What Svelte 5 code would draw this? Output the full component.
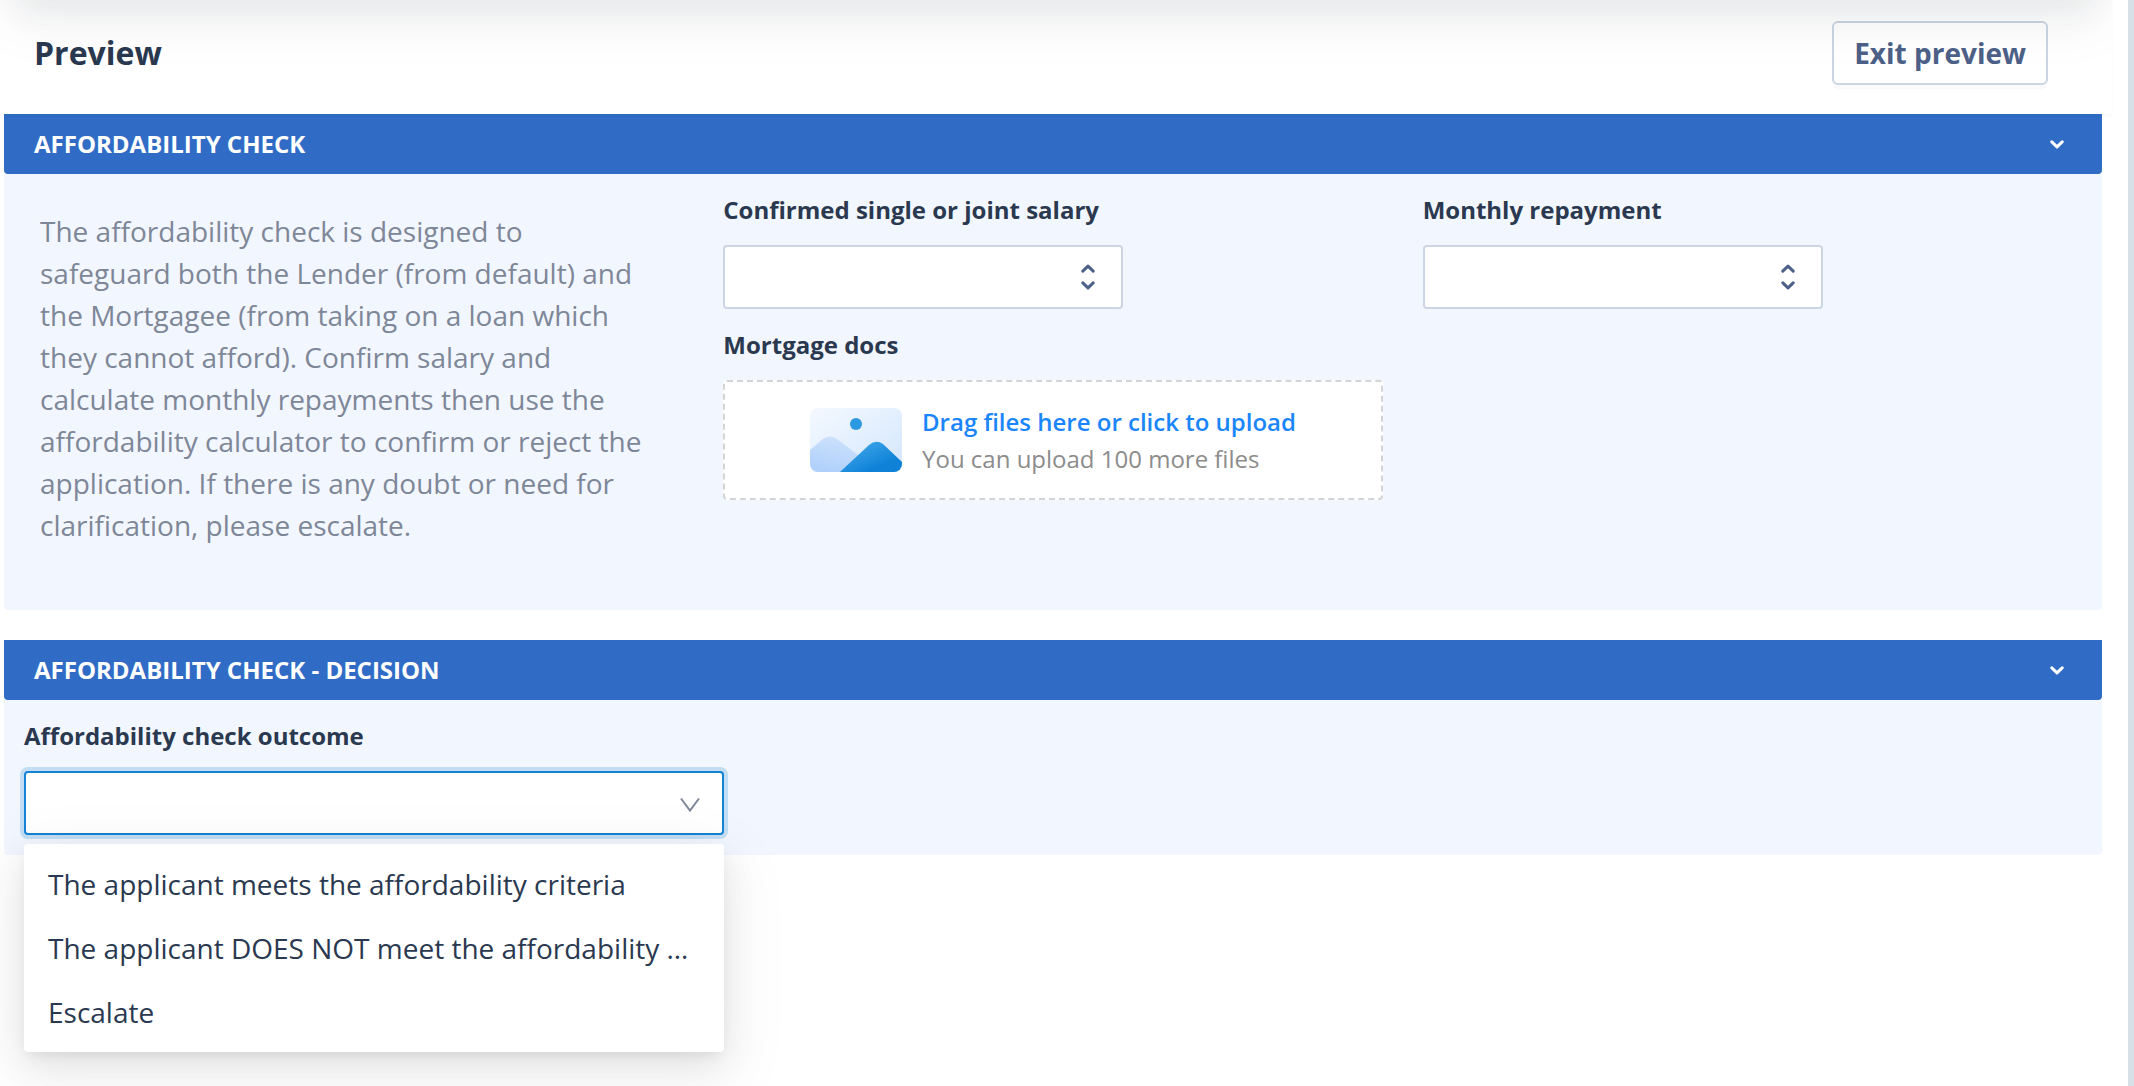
<script lang='ts'>
  type Option = { value: string, label: string }

  const intro = 'The affordability check is designed to safeguard both the Lender (from default) and the Mortgagee (from taking on a loan which they cannot afford). Confirm salary and calculate monthly repayments then use the affordability calculator to confirm or reject the application. If there is any doubt or need for clarification, please escalate.'

  const options: Option[] = [
    { value: 'meets', label: 'The applicant meets the affordability criteria' },
    { value: 'fails', label: 'The applicant DOES NOT meet the affordability criteria' },
    { value: 'escalate', label: 'Escalate' },
  ]

  let checkOpen = $state(true)
  let decisionOpen = $state(true)
  let menuOpen = $state(true)
  let outcome = $state('')
  let salary = $state<number | null>(null)
  let repayment = $state<number | null>(null)

  function choose(value: string) {
    outcome = value
    menuOpen = false
  }
</script>

{#snippet chevron()}
  <svg class='chevron' viewBox='0 0 14 9' width='14' height='9' aria-hidden='true'>
    <path d='M1.8 1.8 L7 6.8 L12.2 1.8' />
  </svg>
{/snippet}

{#snippet sectionHeader(title: string, open: boolean, toggle: () => void)}
  <h2>
    <button class='section-toggle' aria-expanded={open} onclick={toggle}>
      <span>{title}</span>
      {@render chevron()}
    </button>
  </h2>
{/snippet}

{#snippet stepper(step: (by: number) => void)}
  <div class='stepper'>
    <button class='up' aria-label='Increase' onclick={() => step(1)}>{@render chevron()}</button>
    <button aria-label='Decrease' onclick={() => step(-1)}>{@render chevron()}</button>
  </div>
{/snippet}

<div class='page'>
  <main>
    <header>
      <h1>Preview</h1>
      <button class='exit'>Exit preview</button>
    </header>

    <section>
      {@render sectionHeader('AFFORDABILITY CHECK', checkOpen, () => checkOpen = !checkOpen)}
      {#if checkOpen}
        <div class='body columns'>
          <p class='intro'>{intro}</p>
          <div class='column'>
            <div class='field'>
              <label for='salary'>Confirmed single or joint salary</label>
              <div class='number'>
                <input id='salary' type='number' bind:value={salary} />
                {@render stepper(by => salary = (salary ?? 0) + by)}
              </div>
            </div>
            <div class='field'>
              <label for='docs'>Mortgage docs</label>
              <div class='upload'>
                <svg class='picture' viewBox='0 0 92 64' width='92' height='64' aria-hidden='true'>
                  <defs>
                    <linearGradient id='sky' x1='0' y1='0' x2='1' y2='1'>
                      <stop offset='0' stop-color='#f4f9ff' />
                      <stop offset='1' stop-color='#d3e6fc' />
                    </linearGradient>
                    <linearGradient id='far' x1='0.6' y1='0' x2='0.3' y2='1'>
                      <stop offset='0' stop-color='#cde1fc' />
                      <stop offset='1' stop-color='#aed0fb' />
                    </linearGradient>
                    <linearGradient id='near' x1='0.2' y1='0.3' x2='0.65' y2='0.8'>
                      <stop offset='0' stop-color='#369fe5' />
                      <stop offset='1' stop-color='#0f82d8' />
                    </linearGradient>
                    <clipPath id='frame'><rect width='92' height='64' rx='8' /></clipPath>
                  </defs>
                  <g clip-path='url(#frame)'>
                    <rect width='92' height='64' fill='url(#sky)' />
                    <path d='M0 42 L13 31 Q20 26 27 31 L48 47 L40 64 H0 Z' fill='url(#far)' />
                    <path d='M30 64 L59 37 Q66 31 73 36 L92 54 V64 Z' fill='url(#near)' />
                    <circle cx='46' cy='16' r='6' fill='#2a99e1' />
                  </g>
                </svg>
                <div class='upload-text'>
                  <span class='upload-title'>Drag files here or click to upload</span>
                  <span class='upload-hint'>You can upload 100 more files</span>
                </div>
                <input id='docs' type='file' multiple />
              </div>
            </div>
          </div>
          <div class='column'>
            <div class='field'>
              <label for='repayment'>Monthly repayment</label>
              <div class='number'>
                <input id='repayment' type='number' bind:value={repayment} />
                {@render stepper(by => repayment = (repayment ?? 0) + by)}
              </div>
            </div>
          </div>
        </div>
      {/if}
    </section>

    <section>
      {@render sectionHeader('AFFORDABILITY CHECK - DECISION', decisionOpen, () => decisionOpen = !decisionOpen)}
      {#if decisionOpen}
        <div class='body decision'>
          <div class='field'>
            <label for='outcome'>Affordability check outcome</label>
            <div class='select'>
              <select id='outcome' bind:value={outcome}>
                <option value=''></option>
                {#each options as { value, label } (value)}
                  <option {value}>{label}</option>
                {/each}
              </select>
              <svg class='arrow' viewBox='0 0 22 16' width='22' height='16' aria-hidden='true'>
                <path d='M2 1.5 L11 13.5 L20 1.5' />
              </svg>
              {#if menuOpen}
                <ul class='menu'>
                  {#each options as { value, label } (value)}
                    <li><button onclick={() => choose(value)}>{label}</button></li>
                  {/each}
                </ul>
              {/if}
            </div>
          </div>
        </div>
      {/if}
    </section>
  </main>
</div>

<style>
  :global(body) {
    margin: 0;
    background: #fff;
  }

  .page {
    box-sizing: border-box;
    min-height: 100vh;
    border-right: 6px solid #d7dfe7;
    padding-right: 16px;
    overflow: hidden;
    color: #2a394f;
    font-family: 'Open Sans', 'Noto Sans', sans-serif;
    font-size: 28px;
  }

  .page :is(h1, h2, p, ul) {
    margin: 0;
    padding: 0;
  }

  .page :is(button, input, select) {
    box-sizing: border-box;
    margin: 0;
    font-family: inherit;
    color: inherit;
  }

  button {
    cursor: pointer;
  }

  header {
    position: relative;
    box-sizing: border-box;
    display: flex;
    align-items: center;
    justify-content: space-between;
    height: 114px;
    padding: 0 64px 8px 34px;
    overflow: hidden;
    box-shadow: 0 2px 4px rgba(0, 0, 0, 0.03);
  }

  header::before {
    content: '';
    position: absolute;
    inset: -100px 16px 100%;
    box-shadow: 0 12px 32px rgba(20, 30, 50, 0.06), 0 18px 56px 8px rgba(20, 40, 40, 0.05);
  }

  h1 {
    font-size: 32px;
    font-weight: 700;
    line-height: 44px;
  }

  .exit {
    height: 64px;
    padding: 0 20px;
    border: 2px solid #cbd5e4;
    border-radius: 6px;
    background: transparent;
    box-shadow: 0 4px 0 rgba(0, 0, 0, 0.02);
    font-size: 28px;
    font-weight: 700;
  }

  .page .exit {
    color: #4d6188;
  }

  section {
    margin: 0 10px 30px 4px;
  }

  .section-toggle {
    display: flex;
    align-items: center;
    justify-content: space-between;
    width: 100%;
    height: 60px;
    padding: 0 38px 0 30px;
    border: none;
    border-radius: 0 0 4px 4px;
    background: #306cc5;
    font-size: 24px;
    font-weight: 700;
    line-height: 32px;
  }

  .page .section-toggle {
    color: #fff;
  }

  .chevron {
    display: block;
    fill: none;
    stroke: currentColor;
    stroke-width: 3;
    stroke-linecap: round;
    stroke-linejoin: round;
  }

  .body {
    box-sizing: border-box;
    background: #f2f6fe;
    border-radius: 0 0 4px 4px;
  }

  .columns {
    display: grid;
    grid-template-columns: repeat(3, minmax(0, 1fr));
    padding-bottom: 64px;
  }

  .page .intro {
    padding: 36px 54px 0 36px;
    line-height: 42px;
    color: #7e8798;
  }

  .column {
    display: flex;
    flex-direction: column;
    gap: 18px;
    padding: 18px 20px 0;
  }

  .decision {
    padding: 18px 0 20px 20px;
  }

  .field label {
    display: block;
    margin-bottom: 17px;
    font-size: 24px;
    font-weight: 700;
    line-height: 36px;
  }

  .number {
    box-sizing: border-box;
    display: flex;
    align-items: center;
    max-width: 400px;
    height: 64px;
    padding-right: 26px;
    border: 2px solid #cbd5e4;
    border-radius: 4px;
    background: #fff;
  }

  .number input {
    flex: 1;
    min-width: 0;
    height: 100%;
    padding: 0 22px;
    border: none;
    outline: none;
    background: transparent;
    font-size: 28px;
    appearance: textfield;
  }

  .number input::-webkit-inner-spin-button {
    display: none;
  }

  .stepper {
    display: flex;
    flex-direction: column;
    gap: 8px;
  }

  .stepper button {
    padding: 0;
    border: none;
    background: none;
  }

  .stepper .chevron {
    color: #4d6188;
  }

  .up .chevron {
    transform: rotate(180deg);
  }

  .upload {
    position: relative;
    box-sizing: border-box;
    display: flex;
    align-items: center;
    justify-content: center;
    gap: 20px;
    height: 120px;
    border: 2px dashed #d4d4d4;
    border-radius: 4px;
    background: #fff;
  }

  .upload input {
    position: absolute;
    inset: 0;
    width: 100%;
    opacity: 0;
    cursor: pointer;
  }

  .upload-text {
    display: flex;
    flex-direction: column;
    font-size: 24px;
    line-height: 37px;
  }

  .upload-title {
    color: #1b86fb;
    font-weight: 600;
  }

  .upload-hint {
    color: #8c8c8c;
  }

  .select {
    position: relative;
    width: calc((100% + 22px) / 3);
  }

  select {
    display: block;
    width: 100%;
    height: 64px;
    padding: 0 56px 0 22px;
    border: 2px solid #1783d3;
    border-radius: 4px;
    outline: none;
    background: #fff;
    box-shadow: 0 0 0 4px #c3def4;
    font-size: 28px;
    appearance: none;
  }

  .arrow {
    position: absolute;
    top: 26px;
    right: 23px;
    fill: none;
    stroke: #7e8798;
    stroke-width: 2;
    pointer-events: none;
  }

  .menu {
    position: absolute;
    top: 73px;
    left: 0;
    right: 0;
    border-radius: 4px;
    background: #fff;
    box-shadow: 0 6px 12px -4px rgba(0, 0, 0, 0.08), 0 12px 36px rgba(0, 0, 0, 0.08), 0 18px 64px 12px rgba(0, 0, 0, 0.05);
    list-style: none;
  }

  .page .menu {
    padding: 8px 0;
  }

  .menu button {
    display: block;
    width: 100%;
    height: 64px;
    padding: 0 24px;
    border: none;
    background: none;
    font-size: 28px;
    text-align: left;
    white-space: nowrap;
    overflow: hidden;
    text-overflow: ellipsis;
  }

  .menu button:hover {
    background: #f2f6fe;
  }
</style>
